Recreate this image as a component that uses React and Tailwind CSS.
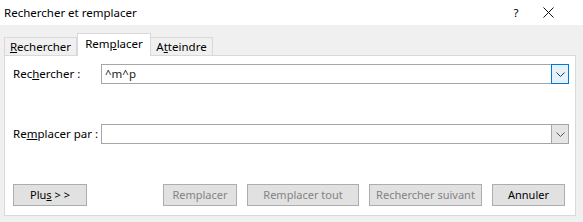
import React from "react";

const font = { fontFamily: '"Segoe UI", "Noto Sans", sans-serif' };

function Chevron({ color = "#333" }) {
  return (
    <svg width="9" height="5" viewBox="0 0 9 5" fill="none">
      <path d="M0.5 0.5 L4.5 4.5 L8.5 0.5" stroke={color} strokeWidth="1" />
    </svg>
  );
}

function Combo({ value, focused }) {
  return (
    <div className="flex h-[20px] w-[468px] border border-[#a6a6a6] bg-white">
      <div className="flex flex-1 items-center pl-[3px] text-[11.5px] text-[#222]">{value}</div>
      {focused ? (
        <div className="-my-px -mr-px flex w-[18px] items-center justify-center border border-[#0078d7] bg-[#e5f1fb]">
          <Chevron color="#333" />
        </div>
      ) : (
        <div className="flex w-[17px] items-center justify-center border-l border-[#a6a6a6] bg-[#e5e5e5]">
          <Chevron color="#55594a" />
        </div>
      )}
    </div>
  );
}

function Btn({ children, w, disabled }) {
  return (
    <div
      className={`flex h-[22px] items-center justify-center whitespace-nowrap border border-[#adadad] bg-[#e1e1e1] text-[11px] ${
        disabled ? "text-[#838383]" : "text-black"
      } ${w}`}
    >
      {children}
    </div>
  );
}

export default function App() {
  return (
    <div className="flex h-[222px] w-[583px] flex-col overflow-hidden bg-[#f0f0f0] whitespace-nowrap" style={font}>
      <div className="flex h-[25px] items-center bg-white">
        <div className="pl-[4px] text-[11.5px] text-black">Rechercher et remplacer</div>
        <div className="ml-auto flex items-center">
          <div className="w-[54px] text-center text-[11.5px] text-black">?</div>
          <div className="flex w-[40px] items-center justify-start">
            <svg width="11" height="11" viewBox="0 0 11 11">
              <path d="M0.5 0.5 L10.5 10.5 M10.5 0.5 L0.5 10.5" stroke="#111" strokeWidth="1" />
            </svg>
          </div>
        </div>
      </div>

      <div className="relative z-10 flex h-[30px] items-end pl-[4px]">
        <div className="flex h-[18px] w-[73px] items-center justify-center border border-b-0 border-[#d9d9d9] text-[11.5px] text-black">
          <span>
            <span className="underline">R</span>echercher
          </span>
        </div>
        <div className="-mb-px flex h-[23px] w-[74px] items-center justify-center border border-b-0 border-[#d9d9d9] bg-white pb-[2px] text-[11.5px] text-black">
          <span>
            Rem<span className="underline">p</span>lacer
          </span>
        </div>
        <div className="flex h-[18px] w-[62px] items-center justify-center border border-b-0 border-l-0 border-[#d9d9d9] text-[11.5px] text-black">
          <span>
            A<span className="underline">t</span>teindre
          </span>
        </div>
      </div>

      <div className="mx-[4px] flex h-[161px] w-[572px] flex-col border border-[#d9d9d9] bg-white pl-[8px] pt-[8px]">
        <div className="flex items-center">
          <div className="w-[88px] text-[11.5px] text-black">
            Rec<span className="underline">h</span>ercher :
          </div>
          <Combo value="^m^p" focused />
        </div>
        <div className="mt-[40px] flex items-center">
          <div className="w-[88px] text-[11.5px] text-black">
            Re<span className="underline">m</span>placer par :
          </div>
          <Combo value="" />
        </div>
        <div className="mt-[40px] flex items-center">
          <Btn w="w-[74px]">
            <span>
              Plu<span className="underline">s</span> &gt; &gt;
            </span>
          </Btn>
          <div className="ml-[76px] flex gap-[10px]">
            <Btn w="w-[74px]" disabled>Remplacer</Btn>
            <Btn w="w-[112px]" disabled>Remplacer tout</Btn>
            <Btn w="w-[113px]" disabled>Rechercher suivant</Btn>
            <Btn w="w-[73px]">Annuler</Btn>
          </div>
        </div>
      </div>
    </div>
  );
}
